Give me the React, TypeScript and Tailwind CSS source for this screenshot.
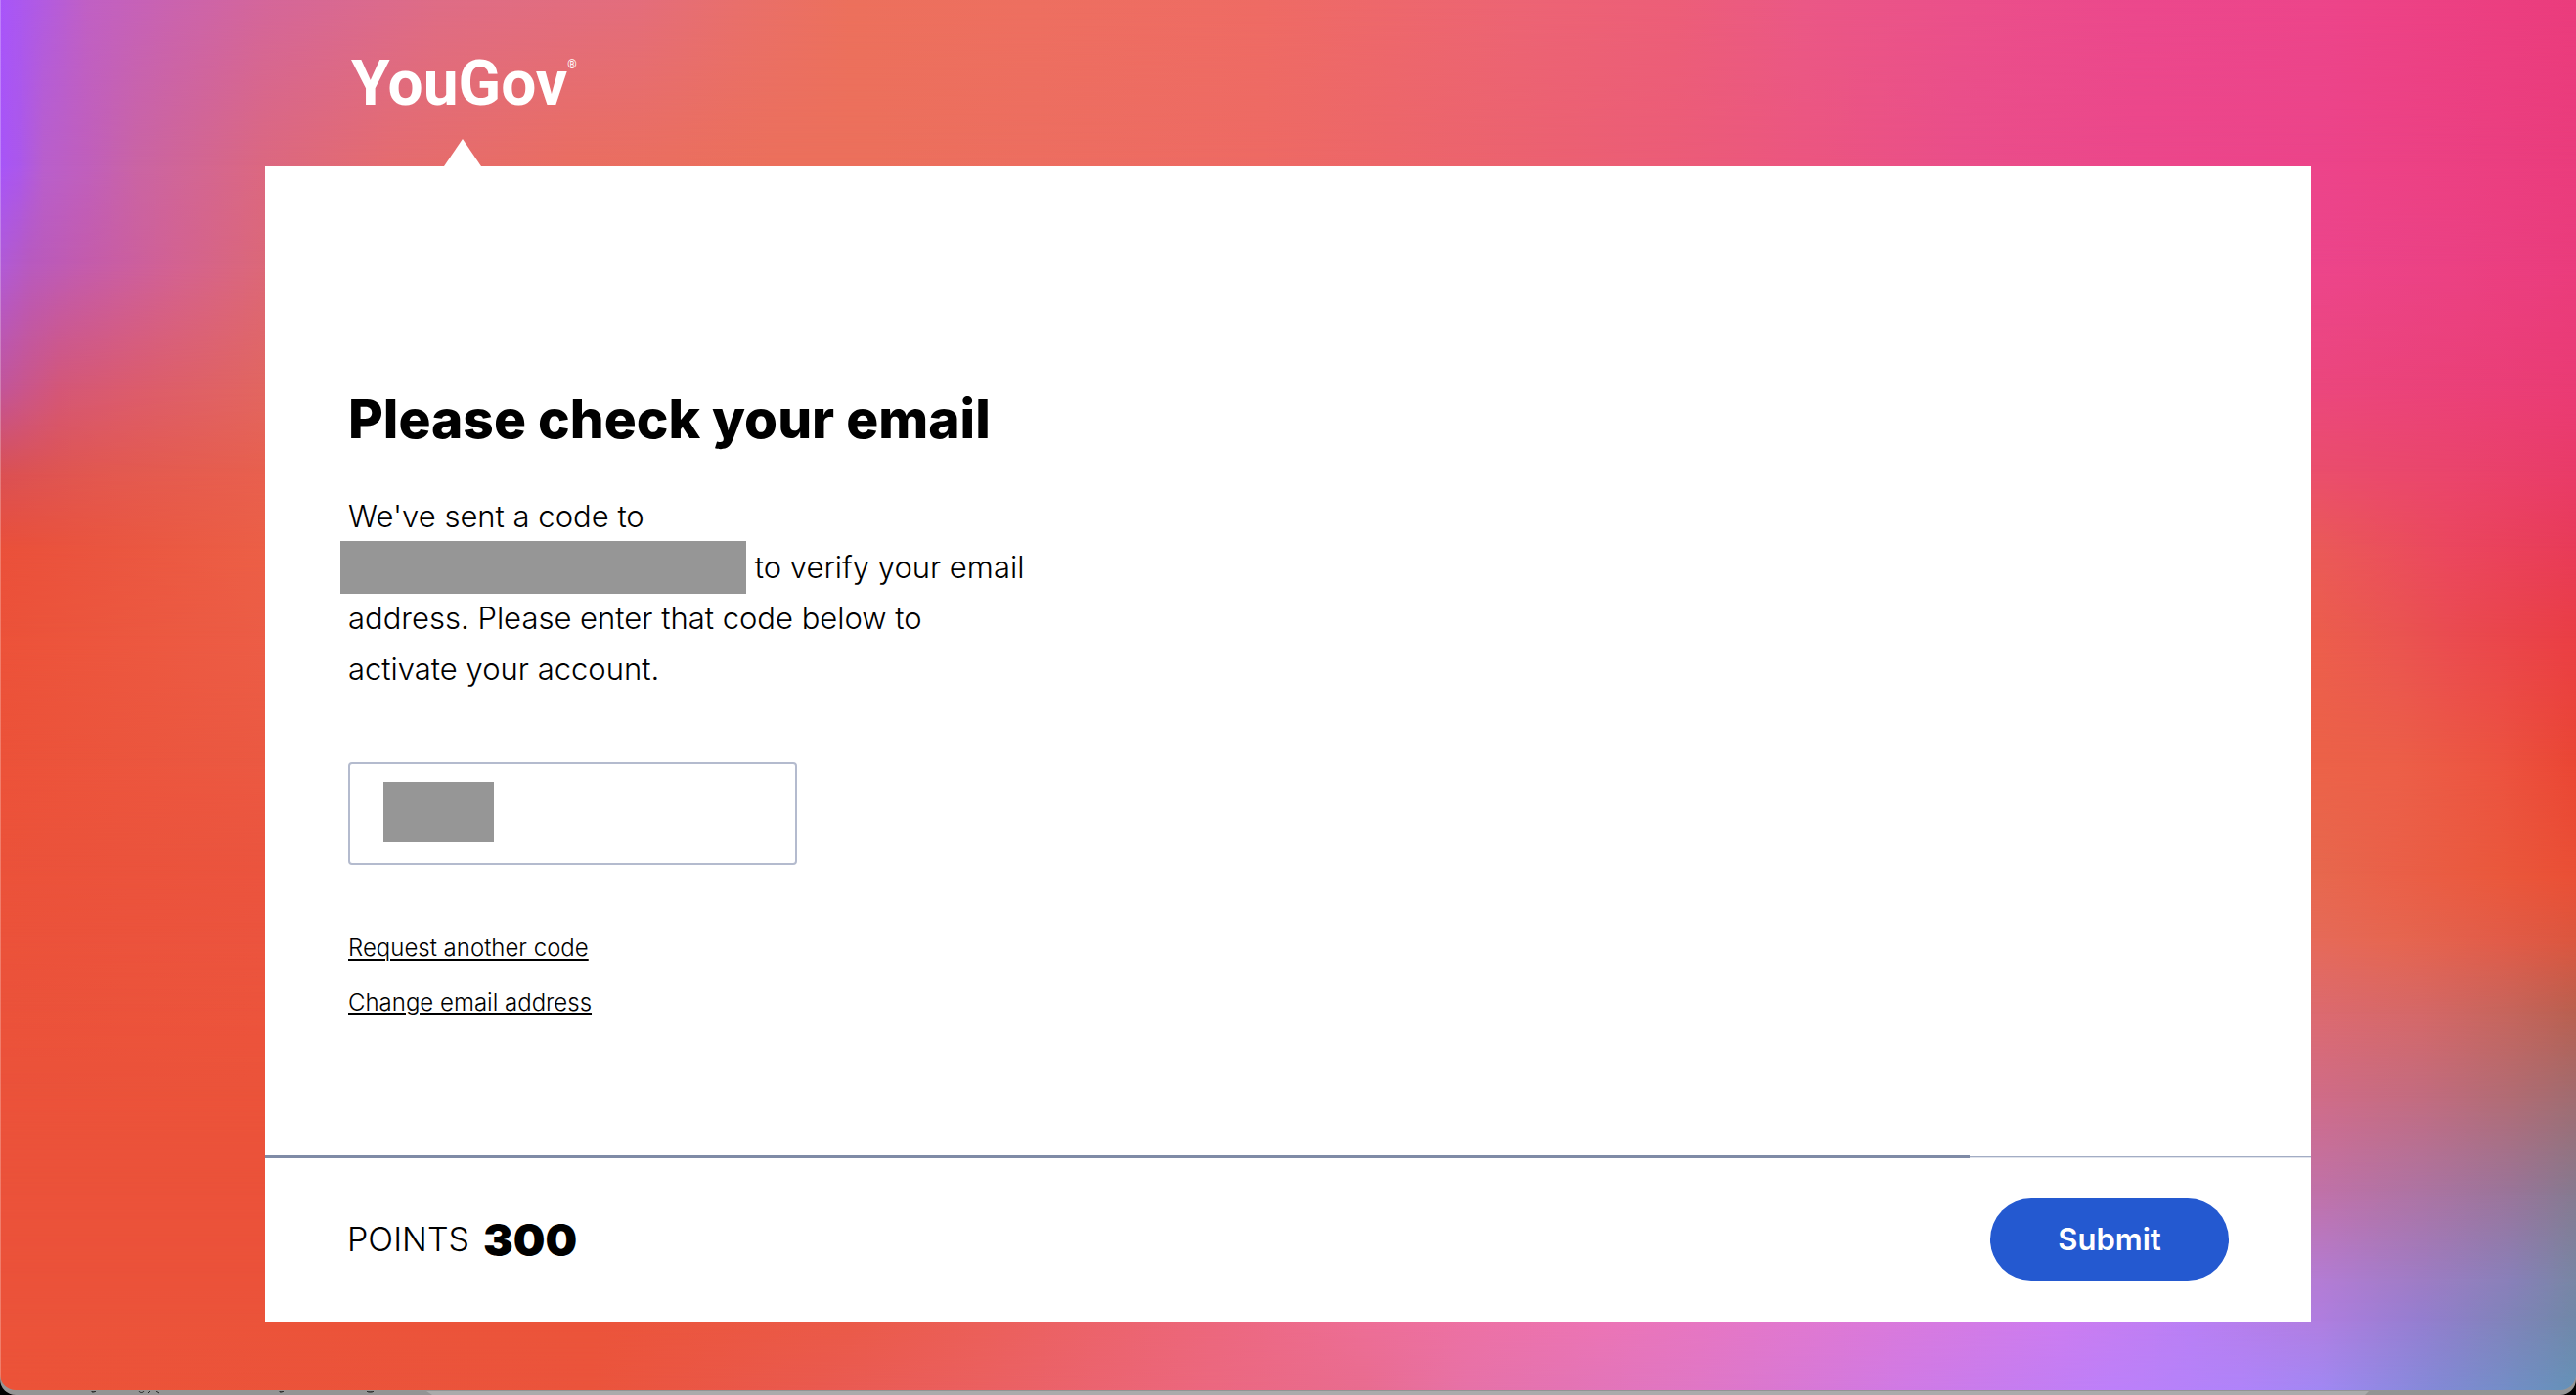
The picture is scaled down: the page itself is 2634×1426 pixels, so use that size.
import type { CSSProperties, ReactNode } from "react";

type Stop = [at: number, color: string];

/* The backdrop is a colour mesh: each row is a horizontal gradient at a height
   (all positions in percent), and neighbouring rows fade into each other. */
const MESH: { y: number; stops: Stop[] }[] = [
  {
    y: 0,
    stops: [
      [0, "#a855f9"], [0.8, "#ab58ee"], [1.7, "#b25be0"], [3.4, "#c060c4"], [6.8, "#ca63ae"],
      [10.3, "#d4669a"], [17, "#de6c86"], [24.7, "#e36d7c"], [28.5, "#e86f6c"], [33, "#ec705c"],
      [40, "#ed6f60"], [49, "#ee6b64"], [59, "#ec6474"], [65, "#ec5e78"], [70, "#ea5886"],
      [76, "#ea508a"], [83, "#eb488c"], [90, "#ec458a"], [94, "#ec4184"], [100, "#ea3c7c"],
    ],
  },
  {
    y: 12,
    stops: [
      [0, "#a755f8"], [0.8, "#ac58ea"], [1.7, "#b95fcc"], [3.4, "#c05fbc"], [5.3, "#ca64a4"],
      [10.3, "#dc6880"], [15, "#e56c70"], [22, "#ea6e62"], [30, "#ec705c"], [34, "#ec705c"],
      [40, "#ed6e60"], [49, "#ee6a64"], [59, "#ec6270"], [65, "#ec5c78"], [70, "#ec5680"],
      [76, "#ea4e8a"], [83, "#ec478b"], [90, "#ec448a"], [94, "#ec4184"], [100, "#ea3c7c"],
    ],
  },
  {
    y: 19,
    stops: [
      [0, "#b05ad8"], [1.2, "#b85abf"], [3.4, "#c45cac"], [6.8, "#d36292"], [10.3, "#dc6878"],
      [90, "#ec458b"], [95, "#eb4184"], [100, "#ea3c7c"],
    ],
  },
  {
    y: 28,
    stops: [[0, "#c2559a"], [2.3, "#d45778"], [5.3, "#dc5c6c"], [10.3, "#e26660"], [90, "#eb477d"], [100, "#ea3b74"]],
  },
  {
    y: 34,
    stops: [[0, "#da5054"], [3.8, "#e25850"], [10.3, "#e8604e"], [90, "#ea4e6c"], [95, "#ea456c"], [100, "#e93b68"]],
  },
  {
    y: 39.5,
    stops: [[0, "#ea503a"], [3.8, "#ea553f"], [10.3, "#ec5f46"], [90, "#ea5a58"], [95, "#eb475e"], [100, "#e83b58"]],
  },
  {
    y: 46,
    stops: [[0, "#ec5239"], [10.3, "#ec5d46"], [90, "#ec5e4c"], [93, "#ea5550"], [95, "#ea4c50"], [100, "#ea3e44"]],
  },
  {
    y: 55,
    stops: [[0, "#ec5239"], [10.3, "#eb5942"], [90, "#ec6248"], [93, "#ec5f48"], [97, "#ec5340"], [100, "#ea4634"]],
  },
  {
    y: 63,
    stops: [[0, "#eb523a"], [10.3, "#eb543e"], [90, "#e7684e"], [93, "#ea6048"], [97, "#ea583c"], [100, "#ea4f35"]],
  },
  {
    y: 67.5,
    stops: [[0, "#eb523a"], [10.3, "#eb543e"], [90, "#e66a58"], [93, "#e66650"], [97, "#e25c48"], [100, "#dc563e"]],
  },
  {
    y: 73,
    stops: [[0, "#eb523a"], [10.3, "#ec543c"], [90, "#dc6a70"], [94, "#d46868"], [97.6, "#c4655c"], [100, "#b86050"]],
  },
  {
    y: 79,
    stops: [[0, "#eb523a"], [10.3, "#eb533a"], [90, "#d06c88"], [94, "#c26c80"], [97.6, "#b06c74"], [100, "#a06c70"]],
  },
  {
    y: 86,
    stops: [[0, "#eb523a"], [10.3, "#eb523a"], [90, "#c072aa"], [94, "#ac74a4"], [97.6, "#98759a"], [100, "#857a90"]],
  },
  {
    y: 92,
    stops: [[0, "#eb523a"], [10.3, "#eb523a"], [90, "#b47cd4"], [94, "#9e7cc4"], [97.6, "#8880b8"], [100, "#7886a4"]],
  },
  {
    y: 95,
    stops: [
      [0, "#eb533a"], [23, "#eb543a"], [33, "#ea5a48"], [38, "#eb5f58"], [47, "#ec677c"],
      [53, "#ed6e96"], [62, "#ec74b4"], [70, "#e078d0"], [80, "#cc7cf0"], [85, "#b97ff4"],
      [90, "#b07ee0"], [94, "#947ed0"], [100, "#7088a8"],
    ],
  },
  {
    y: 100,
    stops: [
      [0, "#ec5338"], [23, "#eb543c"], [32, "#ea5a50"], [38, "#eb6060"], [47, "#ec6880"],
      [53, "#e96c90"], [57, "#e772a8"], [66, "#e077c6"], [74, "#d07ae6"], [82, "#bd80fa"],
      [87, "#b084fa"], [90, "#a288f4"], [95, "#808ad4"], [100, "#6592b8"],
    ],
  },
];

function meshRowStyle(index: number): CSSProperties {
  const row = MESH[index];
  const next = MESH[index + 1];
  const style: CSSProperties = {
    backgroundImage: `linear-gradient(to right, ${row.stops.map(([at, c]) => `${c} ${at}%`).join(", ")})`,
  };
  if (next) {
    style.maskImage = `linear-gradient(to bottom, #000 ${row.y}%, transparent ${next.y}%)`;
  }
  return style;
}

function Backdrop() {
  const order = MESH.map((_, i) => i).reverse();
  return (
    <div aria-hidden="true" className="absolute inset-0">
      {order.map((i) => (
        <div key={i} className="absolute inset-0" style={meshRowStyle(i)} />
      ))}
      <div className="absolute inset-y-0 left-0 w-px bg-white/25" />
    </div>
  );
}

/* The sliver of the window that sits behind this one. */
function WindowBehind() {
  return (
    <div aria-hidden="true" className="absolute inset-x-0 bottom-0 flex h-10 bg-black">
      <div className="flex flex-1 items-end overflow-hidden rounded-b-2xl bg-[#949494]">
        <svg className="h-1 w-[446px] shrink-0" viewBox="0 0 446 4">
          <path d="M436 0h10v4h-4z" fill="#ababab" />
          <path d="M94 0h4l-2 1h-2zM142 0c1 2 4 2 5 0M153 0l-2 2M160 0l3 2M286 0h4l-2 1h-2zM375 0c1 1.500 6 1.500 7 0z" fill="none" stroke="#222" />
        </svg>
        <div className="h-1 flex-1 bg-[#ababab]" />
        <svg className="h-1 w-[216px] shrink-0" viewBox="0 0 216 4">
          <path d="M0 0h4l-4 4z" fill="#ababab" />
        </svg>
      </div>
    </div>
  );
}

function Redacted({ className }: { className: string }) {
  return <span role="img" aria-label="Hidden" className={`bg-[#969696] ${className}`} />;
}

function TextLink({ children }: { children: ReactNode }) {
  return (
    <a
      href="#"
      className="text-[24px] leading-[56px] font-[350] underline decoration-2 underline-offset-[3px]"
    >
      {children}
    </a>
  );
}

export default function App() {
  return (
    <div className="relative flex min-h-screen flex-col pb-[5px] font-['Inter',sans-serif] text-black">
      <WindowBehind />
      <div className="relative flex flex-1 flex-col overflow-hidden rounded-b-2xl">
        <Backdrop />

        <div className="relative mx-auto flex w-full max-w-[2092px] flex-1 flex-col pb-[70px]">
          <header className="flex flex-col items-start pl-[88px] pt-[46px] text-white">
            <a href="#" className="flex items-start font-['Roboto',sans-serif] text-[64px] leading-[80px] font-bold">
              YouGov
              <span className="pt-3 text-[12px] leading-4 font-normal">®</span>
            </a>
            <svg aria-hidden="true" className="mt-4 ml-[95px] h-7 w-[38px]" viewBox="0 0 38 28" fill="currentColor">
              <path d="M19 0 38 28H0z" />
            </svg>
          </header>

          <form className="flex flex-1 flex-col bg-white" onSubmit={(e) => e.preventDefault()}>
            <main className="flex flex-1 flex-col items-start px-[85px] pt-[222px]">
              <h1 className="text-[55px] leading-[72px] font-extrabold">Please check your email</h1>
              <p className="mt-[38px] max-w-[760px] text-[31px] leading-[52px] font-[350]">
                We've sent a code to
                <br />
                <Redacted className="-my-1 -ml-2 inline-block h-[54px] w-[415px] align-[-12px]" /> to verify your email
                <br />
                address. Please enter that code below to
                <br />
                activate your account.
              </p>
              <div className="relative mt-[69px]">
                <input
                  type="text"
                  aria-label="Verification code"
                  className="block h-[105px] w-[459px] rounded-sm border-2 border-[#b4bbce] bg-white px-9 text-[31px] outline-none"
                />
                <Redacted className="absolute top-5 left-9 h-[62px] w-[113px]" />
              </div>
              <nav className="mt-[57px] flex flex-col items-start">
                <TextLink>Request another code</TextLink>
                <TextLink>Change email address</TextLink>
              </nav>
            </main>

            <div
              role="progressbar"
              aria-label="Progress"
              aria-valuenow={83}
              aria-valuemin={0}
              aria-valuemax={100}
              className="flex h-[3px] items-center"
            >
              <div className="h-[3px] w-5/6 bg-[#7f8ba6]" />
              <div className="h-px flex-1 bg-[#a3adc4] shadow-[0_1px_0_#dfe3ec]" />
            </div>

            <footer className="flex items-center justify-between px-[84px] pt-[41px] pb-[42px]">
              <p className="flex items-center gap-3.5 text-[34px] leading-[44px] font-light">
                POINTS <strong className="text-[46px] font-black">300</strong>
              </p>
              <button type="submit" className="h-[84px] w-[244px] rounded-full bg-[#2459d0] text-[31px] font-semibold text-white">
                Submit
              </button>
            </footer>
          </form>
        </div>
      </div>
    </div>
  );
}
